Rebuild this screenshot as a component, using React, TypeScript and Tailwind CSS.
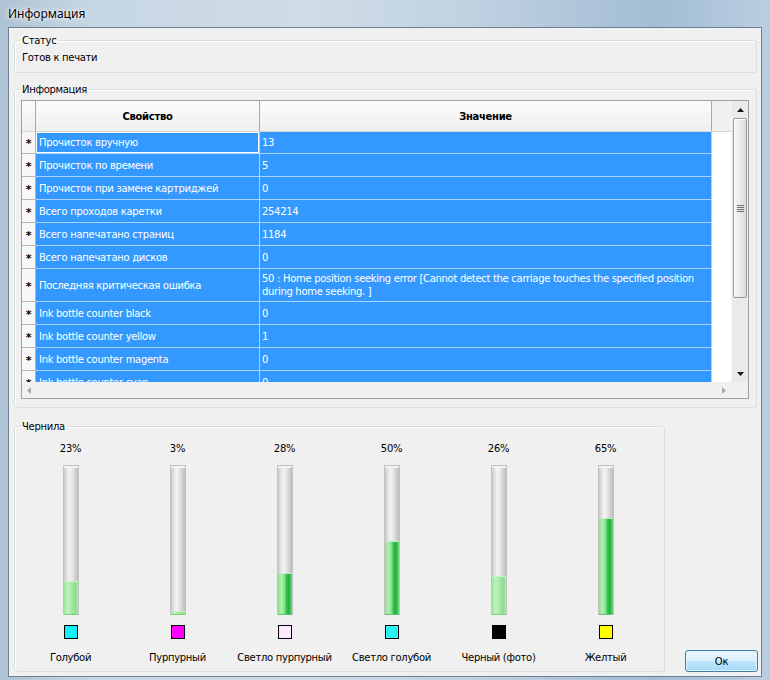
import React from "react";

type Row = { k: string; v: React.ReactNode; tall?: boolean };

const rows: Row[] = [
  { k: "Прочисток вручную", v: "13" },
  { k: "Прочисток по времени", v: "5" },
  { k: "Прочисток при замене картриджей", v: "0" },
  { k: "Всего проходов каретки", v: "254214" },
  { k: "Всего напечатано страниц", v: "1184" },
  { k: "Всего напечатано дисков", v: "0" },
  {
    k: "Последняя критическая ошибка",
    v: (
      <>
        50 : Home position seeking error [Cannot detect the carriage touches the specified position
        <br />
        during home seeking. ]
      </>
    ),
    tall: true,
  },
  { k: "Ink bottle counter black", v: "0" },
  { k: "Ink bottle counter yellow", v: "1" },
  { k: "Ink bottle counter magenta", v: "0" },
  { k: "Ink bottle counter cyan", v: "0" },
];

const inks = [
  { p: 23, name: "Голубой", color: "bg-[#10f0f8]", dark: false },
  { p: 3, name: "Пурпурный", color: "bg-[#ff00ff]", dark: false },
  { p: 28, name: "Светло пурпурный", color: "bg-[#fde8fd]", dark: true },
  { p: 50, name: "Светло голубой", color: "bg-[#30f0f8]", dark: true },
  { p: 26, name: "Черный (фото)", color: "bg-[#000000]", dark: false },
  { p: 65, name: "Желтый", color: "bg-[#ffff00]", dark: true },
];

function Tri({ dir, color }: { dir: "up" | "down" | "left" | "right"; color: string }) {
  const d =
    dir === "up"
      ? "M0 4 L3.5 0 L7 4 Z"
      : dir === "down"
      ? "M0 0 L7 0 L3.5 4 Z"
      : dir === "left"
      ? "M4 0 L4 7 L0 3.5 Z"
      : "M0 0 L0 7 L4 3.5 Z";
  const w = dir === "up" || dir === "down" ? 7 : 4;
  const h = dir === "up" || dir === "down" ? 4 : 7;
  return (
    <svg width={w} height={h} viewBox={`0 0 ${w} ${h}`}>
      <path d={d} fill={color} />
    </svg>
  );
}

function InkColumn({ p, name, color, dark }: { p: number; name: string; color: string; dark: boolean }) {
  return (
    <div className="w-[107px] flex flex-col items-center">
      <div className="mt-[9px] leading-[13px] h-[13px]">{p}%</div>
      <div className="mt-[10px] w-[16px] h-[150px] flex flex-col justify-end border-x border-t border-[#c2c2c2] bg-[linear-gradient(90deg,#c9c9c9_0%,#e0e0e0_18%,#f4f4f4_38%,#e4e4e4_62%,#cccccc_85%,#bdbdbd_100%)] shadow-[inset_0_2px_0_#f2f2f2]">
        <div
          style={{ height: `${p}%` }}
          className={
            dark
              ? "border-b border-[#5cc46c] border-t border-t-[#bfeec0] bg-[linear-gradient(90deg,#8fe28f_0%,#aef0ae_25%,#84dd8c_48%,#35c24c_60%,#22b23c_80%,#78d887_100%)]"
              : "border-b border-[#7fd07f] border-t border-t-[#c8f2c8] bg-[linear-gradient(90deg,#9fe69f_0%,#c0f2c0_28%,#a6e9a6_55%,#8edd8e_80%,#a9e6a9_100%)]"
          }
        />
      </div>
      <div className={`mt-[10px] w-[14px] h-[14px] border border-black ${color}`} />
      <div className="mt-[12px] leading-[13px] h-[13px] whitespace-nowrap">{name}</div>
    </div>
  );
}

export default function App() {
  return (
    <div className="w-[770px] h-[680px] flex flex-col overflow-hidden bg-[linear-gradient(90deg,#b0c3d4_0%,#c6d6e3_12%,#d0dce7_40%,#bfd1e1_62%,#a3bdd4_85%,#b9cee0_100%)] font-['DejaVu_Sans',sans-serif] text-[10px] tracking-[-0.3px] text-black">
      <div className="h-[27px] flex items-center pl-[8px] font-['Noto_Sans',sans-serif] text-[12px] tracking-normal [text-shadow:0_0_6px_#ffffff,0_0_3px_#ffffff]">
        Информация
      </div>
      <div className="flex-1 flex px-[8px] pb-[3px]">
        <div className="flex-1 flex flex-col bg-[#f0f0f0] border border-[#6e8193]">
          {/* Статус */}
          <fieldset className="mt-[6px] ml-[5px] mr-[4px] border border-[#d5dfe5] rounded-[3px] shadow-[inset_1px_1px_0_#ffffff]">
            <legend className="ml-[5px] px-[2px] leading-[13px]">Статус</legend>
            <div className="pl-[7px] pt-[4px] pb-[8px] leading-[13px]">Готов к печати</div>
          </fieldset>

          {/* Информация */}
          <fieldset className="mt-[10px] ml-[5px] mr-[4px] border border-[#d5dfe5] rounded-[3px] shadow-[inset_1px_1px_0_#ffffff]">
            <legend className="ml-[5px] px-[2px] leading-[13px]">Информация</legend>
            <div className="pl-[6px] pt-[4px] pb-[8px]">
              <div className="w-[728px] h-[299px] flex flex-col border border-[#a0a0a0] bg-white">
                <div className="flex-1 flex min-h-0">
                  <div className="flex-1 flex flex-col min-h-0">
                    {/* header */}
                    <div className="flex h-[31px] shrink-0 border-b border-[#d5d5d5]">
                      <div className="w-[14px] border-r border-[#a9a9a9] bg-[linear-gradient(#fbfbfb,#efefef)]" />
                      <div className="w-[224px] border-r border-[#a9a9a9] bg-[linear-gradient(#fbfbfb,#efefef)] flex items-center justify-center font-bold">
                        Свойство
                      </div>
                      <div className="w-[452px] border-r border-[#a9a9a9] bg-[linear-gradient(#fbfbfb,#efefef)] flex items-center justify-center font-bold">
                        Значение
                      </div>
                      <div className="flex-1 bg-[#f0f0f0]" />
                    </div>
                    {/* rows */}
                    <div className="flex-1 overflow-hidden">
                      {rows.map((r, i) => (
                        <div
                          key={i}
                          className={`flex ${r.tall ? "h-[33px]" : i === 0 ? "h-[22px]" : "h-[23px]"}`}
                        >
                          <div className="w-[14px] shrink-0 border-r border-b border-[#b4b4b4] bg-[#f7f7f7] flex items-center justify-center font-bold text-[11px] leading-none pt-[2px]">
                            *
                          </div>
                          <div
                            className={`w-[224px] shrink-0 bg-[#3399ff] text-white border-r border-b border-[#a9d3fb] flex items-center pl-[3px] whitespace-nowrap ${
                              i === 0 ? "shadow-[inset_0_0_0_1px_#ffffff]" : ""
                            }`}
                          >
                            {r.k}
                          </div>
                          <div className="w-[452px] shrink-0 bg-[#3399ff] text-white border-r border-b border-[#a9d3fb] flex items-center pl-[2px] whitespace-nowrap leading-[13px]">
                            <div>{r.v}</div>
                          </div>
                          <div className="flex-1 bg-white" />
                        </div>
                      ))}
                    </div>
                  </div>
                  {/* vertical scrollbar */}
                  <div className="w-[17px] shrink-0 flex flex-col bg-[#eaeaea] border-l border-[#f4f4f4]">
                    <div className="h-[17px] flex items-center justify-center">
                      <Tri dir="up" color="#1a1a1a" />
                    </div>
                    <div className="h-[180px] mx-[1px] rounded-[2px] border border-[#9a9a9a] bg-[linear-gradient(90deg,#f5f5f5_0%,#ececec_45%,#dadada_100%)] flex items-center justify-center shadow-[inset_1px_1px_0_#ffffff]">
                      <div className="flex flex-col gap-[1px]">
                        <div className="w-[7px] h-[1px] bg-[#707070]" />
                        <div className="w-[7px] h-[1px] bg-[#707070]" />
                        <div className="w-[7px] h-[1px] bg-[#707070]" />
                        <div className="w-[7px] h-[1px] bg-[#707070]" />
                      </div>
                    </div>
                    <div className="flex-1" />
                    <div className="h-[17px] flex items-center justify-center">
                      <Tri dir="down" color="#1a1a1a" />
                    </div>
                  </div>
                </div>
                {/* horizontal scrollbar */}
                <div className="h-[16px] shrink-0 flex bg-[#f0f0f0]">
                  <div className="flex-1 flex items-center justify-between px-[5px]">
                    <Tri dir="left" color="#a8a8a8" />
                    <Tri dir="right" color="#a8a8a8" />
                  </div>
                  <div className="w-[17px] bg-[#f0f0f0]" />
                </div>
              </div>
            </div>
          </fieldset>

          {/* Чернила + Ok */}
          <div className="mt-[12px] flex items-end">
            <fieldset className="ml-[5px] w-[651px] border border-[#d5dfe5] rounded-[3px] shadow-[inset_1px_1px_0_#ffffff]">
              <legend className="ml-[5px] px-[2px] leading-[13px]">Чернила</legend>
              <div className="flex pl-[2px] pb-[7px]">
                {inks.map((ink) => (
                  <InkColumn key={ink.name} {...ink} />
                ))}
              </div>
            </fieldset>
            <button className="ml-[20px] w-[73px] h-[22px] rounded-[3px] border border-[#3c7fb1] bg-[linear-gradient(#eaf6fd_0%,#d9f0fc_50%,#bee6fd_51%,#a7d9f5_100%)] shadow-[inset_0_0_0_1px_#dff2fc] flex items-center justify-center font-['DejaVu_Sans',sans-serif] text-[10px]">
              Ок
            </button>
          </div>
        </div>
      </div>
    </div>
  );
}
